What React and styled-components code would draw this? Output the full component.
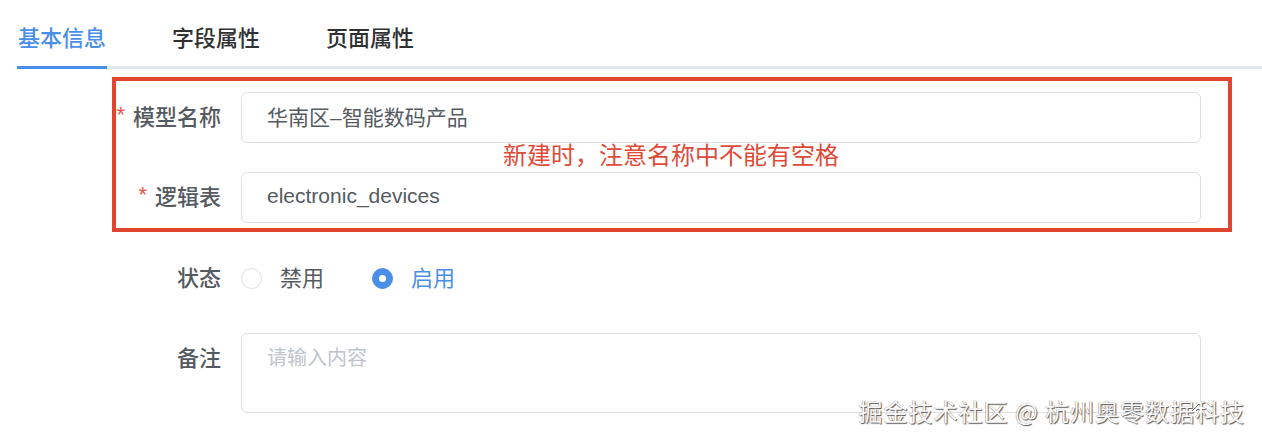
import React, { useState } from "react";
import styled, { createGlobalStyle } from "styled-components";

const GlobalStyle = createGlobalStyle`
  html, body {
    margin: 0;
    padding: 0;
    background: #fff;
  }
  body {
    font-family: "Liberation Sans", "Noto Sans CJK SC", sans-serif;
    -webkit-font-smoothing: antialiased;
  }
`;

const tabs = ["基本信息", "字段属性", "页面属性"];

const App = () => {
  const [active, setActive] = useState(0);
  const [status, setStatus] = useState("on");

  return (
    <Page>
      <GlobalStyle />
      <TabBar>
        {tabs.map((t, i) => (
          <Tab key={t} $active={i === active} onClick={() => setActive(i)}>
            {t}
          </Tab>
        ))}
      </TabBar>

      <Form>
        <Highlight>
          <FormRow $labelWidth={105}>
            <Label>
              <Star>*</Star>模型名称
            </Label>
            <Input defaultValue="华南区–智能数码产品" />
          </FormRow>
          <Note>新建时，注意名称中不能有空格</Note>
          <FormRow $labelWidth={105}>
            <Label>
              <Star>*</Star>逻辑表
            </Label>
            <Input defaultValue="electronic_devices" />
          </FormRow>
        </Highlight>

        <FormRow $labelWidth={221} $spaced>
          <Label>状态</Label>
          <RadioGroup>
            <RadioItem onClick={() => setStatus("off")}>
              <RadioDot $checked={status === "off"} />
              <RadioText $checked={status === "off"}>禁用</RadioText>
            </RadioItem>
            <RadioItem onClick={() => setStatus("on")}>
              <RadioDot $checked={status === "on"} />
              <RadioText $checked={status === "on"}>启用</RadioText>
            </RadioItem>
          </RadioGroup>
        </FormRow>

        <FormRow $labelWidth={221} $spaced>
          <Label>备注</Label>
          <TextArea placeholder="请输入内容" />
        </FormRow>
      </Form>

      <Watermark>掘金技术社区 @ 杭州奥零数据科技</Watermark>
    </Page>
  );
};

const Page = styled.div`
  position: relative;
  width: 1262px;
  height: 446px;
  overflow: hidden;
`;

const TabBar = styled.div`
  display: flex;
  gap: 64px;
  margin-left: 17px;
  border-bottom: 3px solid #e4e7ed;
`;

const Tab = styled.div`
  box-sizing: border-box;
  height: 69px;
  margin-bottom: -3px;
  padding: 6px 1px 0;
  display: flex;
  align-items: center;
  font-family: "Noto Sans CJK SC", sans-serif;
  font-size: 22px;
  font-weight: 500;
  line-height: 1;
  color: ${(p) => (p.$active ? "#4a8fe7" : "#303133")};
  border-bottom: 3px solid ${(p) => (p.$active ? "#4a8fe7" : "transparent")};
  cursor: pointer;
`;

const Form = styled.div`
  display: flex;
  flex-direction: column;
  padding-top: 8px;
`;

const Highlight = styled.div`
  margin-left: 112px;
  width: 1120px;
  box-sizing: border-box;
  border: 4px solid #e2452d;
  padding: 11px 0 5px;
`;

const FormRow = styled.div`
  display: grid;
  grid-template-columns: ${(p) => p.$labelWidth}px 960px;
  column-gap: 20px;
  align-items: start;
  margin-top: ${(p) => (p.$spaced ? "21px" : "0")};
  & + & {
    margin-top: 30px;
  }
`;

const Label = styled.label`
  box-sizing: border-box;
  display: flex;
  align-items: center;
  justify-content: flex-end;
  height: 50px;
  padding-bottom: 4px;
  line-height: 1;
  font-family: "Noto Sans CJK SC", sans-serif;
  font-size: 22px;
  font-weight: 500;
  color: #555a61;
  white-space: nowrap;
`;

const Star = styled.span`
  color: #f0524a;
  font-size: 22px;
  margin-right: 8px;
  font-family: "Liberation Sans", sans-serif;
`;

const Input = styled.input`
  box-sizing: border-box;
  height: 51px;
  width: 960px;
  border: 1px solid #dcdfe6;
  border-radius: 6px;
  padding: 0 25px 3px;
  font-family: "Liberation Sans", "Noto Sans CJK SC", sans-serif;
  font-size: 21px;
  color: #555a61;
  outline: none;
  background: #fff;
`;

const Note = styled.div`
  height: 29px;
  line-height: 22px;
  overflow: visible;
  padding-left: 387px;
  font-family: "Noto Sans CJK SC", sans-serif;
  font-size: 24px;
  color: #e04a38;
  white-space: nowrap;
`;

const RadioGroup = styled.div`
  display: flex;
  align-items: center;
  height: 50px;
  gap: 48px;
`;

const RadioItem = styled.div`
  display: flex;
  align-items: center;
  gap: 18px;
  line-height: 1;
  cursor: pointer;
`;

const RadioDot = styled.span`
  box-sizing: border-box;
  width: 21px;
  height: 21px;
  border-radius: 50%;
  border: 1px solid ${(p) => (p.$checked ? "#4a8fe7" : "#dcdfe6")};
  background: ${(p) => (p.$checked ? "#4a8fe7" : "#fff")};
  display: flex;
  align-items: center;
  justify-content: center;
  &::after {
    content: "";
    width: 7px;
    height: 7px;
    border-radius: 50%;
    background: #fff;
    display: ${(p) => (p.$checked ? "block" : "none")};
  }
`;

const RadioText = styled.span`
  padding-bottom: 4px;
  font-family: "Noto Sans CJK SC", sans-serif;
  font-size: 22px;
  color: ${(p) => (p.$checked ? "#4a8fe7" : "#555a61")};
`;

const TextArea = styled.textarea`
  display: block;
  box-sizing: border-box;
  height: 80px;
  width: 960px;
  border: 1px solid #dcdfe6;
  border-radius: 6px;
  padding: 8px 25px;
  font-family: "Noto Sans CJK SC", sans-serif;
  font-size: 20px;
  line-height: 30px;
  color: #555a61;
  outline: none;
  &::placeholder {
    color: #c0c4cc;
  }
`;

const Watermark = styled.div`
  position: absolute;
  right: 17px;
  bottom: 18px;
  font-family: "Noto Sans CJK SC", sans-serif;
  font-size: 24px;
  letter-spacing: 1px;
  color: #fafafa;
  text-shadow: 1px 1px 1px #555, -0.5px -0.5px 0.5px #999;
  white-space: nowrap;
  pointer-events: none;
`;

export default App;
